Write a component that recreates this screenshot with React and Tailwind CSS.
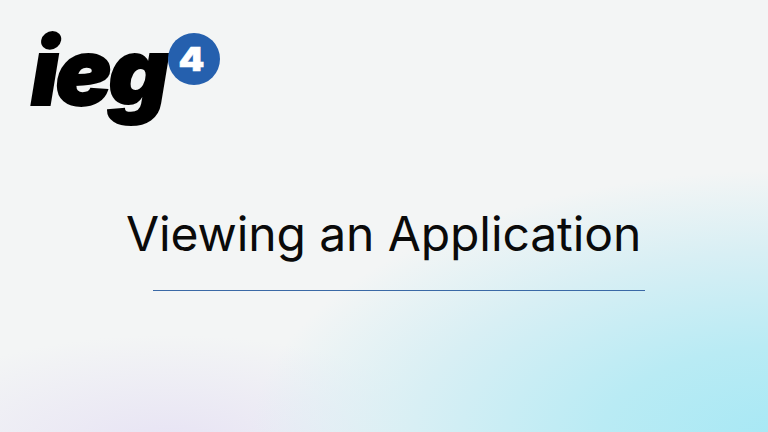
export default function App() {
  return (
    <div className="w-[768px] h-[432px] overflow-hidden flex flex-col bg-[#f3f5f5] bg-[radial-gradient(ellipse_540px_270px_at_790px_440px,#a6e8f5_0%,#b9ebf4_35%,#d8eff4_70%,#f3f5f500_100%),radial-gradient(ellipse_290px_110px_at_170px_445px,#e7e3f4_0%,#f3f5f500_100%)]">
      <div className="h-[208px] pl-[31px] pt-[13px] flex items-start">
        <div className="flex items-start">
          <span className="text-[93px] leading-[116px] font-black italic text-black tracking-[-3px] [font-family:Inter,sans-serif] [-webkit-text-stroke:2px_black]">ieg</span>
          <span className="mt-[20px] ml-[2px] w-[52px] h-[52px] rounded-full bg-[#2560ae] flex items-center justify-center text-white text-[33px] leading-none font-black [font-family:Inter,sans-serif]">
            <span className="block scale-x-[1.12] -translate-x-[2px] [-webkit-text-stroke:0.5px_white]">4</span>
          </span>
        </div>
      </div>
      <h1 className="h-[52px] pl-[126px] text-[48px] leading-[52px] font-normal tracking-[-0.1px] text-[#0a0a0a] whitespace-nowrap [font-family:Inter,sans-serif]">Viewing an Application</h1>
      <div className="ml-[153px] mt-[30px] w-[492px] h-px bg-[#3a69a6]" />
    </div>
  );
}
